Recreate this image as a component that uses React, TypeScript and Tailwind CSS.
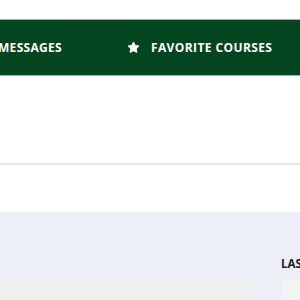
import { Star } from 'lucide-react';

export default function App() {
  return (
    <div className="w-[300px] h-[300px] overflow-hidden bg-white font-['Open_Sans',sans-serif]">
      {/* top nav */}
      <div className="h-[19px] bg-white" />
      <nav className="h-[57px] bg-[#03451f] border-y border-[#9fb4a6] flex items-center whitespace-nowrap">
        <span className="-ml-[2px] text-white font-bold text-[12px] tracking-[0.3px] leading-none">MESSAGES</span>
        <span className="ml-[65px] flex items-center gap-[11px]">
          <Star className="w-[13px] h-[13px] fill-white text-white" strokeWidth={1.5} />
          <span className="text-white font-bold text-[12px] tracking-[0.4px] leading-none">FAVORITE COURSES</span>
        </span>
      </nav>

      {/* page header */}
      <div className="h-[89px] bg-white border-b-2 border-[#e8e8e8]" />
      <div className="h-[48px] bg-white border-b border-[#f3f4f8]" />

      {/* dashboard */}
      <section className="bg-[#eceff7] h-[200px]">
        <div className="h-[67px] flex items-end pb-[11px] pl-[281px] whitespace-nowrap">
          <h2 className="text-[11.5px] font-bold text-[#222] leading-none">LAST VISITED</h2>
        </div>
        <div className="flex">
          <div className="w-[254px] h-[60px] bg-[#efefef] shrink-0" />
          <div className="w-[28px] shrink-0" />
          <div className="w-[120px] h-[60px] bg-[#f4f4f4] shrink-0" />
        </div>
      </section>
    </div>
  );
}
